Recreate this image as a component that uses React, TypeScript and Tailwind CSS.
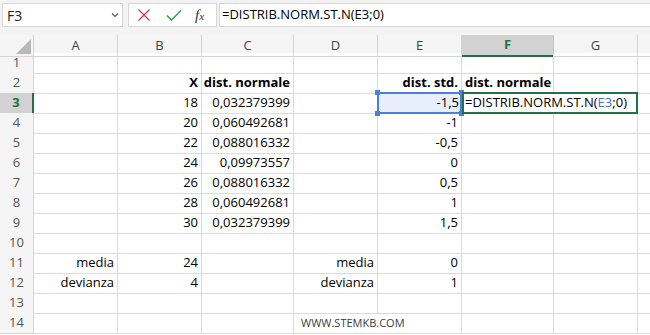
import React from "react";

type Cell = { v: string; a?: "l" | "r"; b?: boolean };

const cols = ["A", "B", "C", "D", "E", "F", "G"];

const rows: (Cell | null)[][] = [
  [null, null, null, null, null, null, null],
  [null, { v: "X", a: "r", b: true }, { v: "dist. normale", a: "r", b: true }, null, { v: "dist. std.", a: "r", b: true }, { v: "dist. normale", a: "l", b: true }, null],
  [null, { v: "18", a: "r" }, { v: "0,032379399", a: "r" }, null, { v: "-1,5", a: "r" }, null, null],
  [null, { v: "20", a: "r" }, { v: "0,060492681", a: "r" }, null, { v: "-1", a: "r" }, null, null],
  [null, { v: "22", a: "r" }, { v: "0,088016332", a: "r" }, null, { v: "-0,5", a: "r" }, null, null],
  [null, { v: "24", a: "r" }, { v: "0,09973557", a: "r" }, null, { v: "0", a: "r" }, null, null],
  [null, { v: "26", a: "r" }, { v: "0,088016332", a: "r" }, null, { v: "0,5", a: "r" }, null, null],
  [null, { v: "28", a: "r" }, { v: "0,060492681", a: "r" }, null, { v: "1", a: "r" }, null, null],
  [null, { v: "30", a: "r" }, { v: "0,032379399", a: "r" }, null, { v: "1,5", a: "r" }, null, null],
  [null, null, null, null, null, null, null],
  [{ v: "media", a: "r" }, { v: "24", a: "r" }, null, { v: "media", a: "r" }, { v: "0", a: "r" }, null, null],
  [{ v: "devianza", a: "r" }, { v: "4", a: "r" }, null, { v: "devianza", a: "r" }, { v: "1", a: "r" }, null, null],
  [null, null, null, null, null, null, null],
  [null, null, null, null, null, null, null],
];

const grid = "grid grid-cols-[34px_84px_84px_92px_84px_84px_92px_84px_12px]";

export default function App() {
  return (
    <div className="w-[650px] h-[335px] overflow-hidden bg-white font-['Open_Sans',sans-serif] text-[#000]">
      {/* formula bar */}
      <div className="flex h-[35px] bg-[#f3f3f3] pt-[3px] pl-[2px]">
        <div className="w-[121px] h-[24px] bg-white border border-[#d6d6d6] flex items-center justify-between pl-[4px] pr-[3px] text-[14px] text-[#222]">
          <span>F3</span>
          <svg width="8" height="6" viewBox="0 0 8 6"><path d="M1 1.5 L4 4.5 L7 1.5" fill="none" stroke="#555" strokeWidth="1.1" /></svg>
        </div>
        <div className="ml-[5px] w-[89px] h-[24px] bg-white border border-[#d6d6d6] flex items-center">
          <svg className="ml-[8px]" width="14" height="14" viewBox="0 0 14 14"><path d="M1.5 1.5 L12.5 12.5 M12.5 1.5 L1.5 12.5" stroke="#e0393e" strokeWidth="1.3" fill="none" /></svg>
          <svg className="ml-[15px]" width="16" height="13" viewBox="0 0 16 13"><path d="M1 6.5 L5.5 11 L15 1.5" stroke="#2f9e44" strokeWidth="1.4" fill="none" /></svg>
          <span className="ml-[13px] font-['Liberation_Serif',serif] italic text-[15px] text-[#333] leading-none">f<span className="text-[11px]">x</span></span>
        </div>
        <div className="ml-[2px] flex-1 h-[24px] bg-white border border-r-0 border-[#d6d6d6] flex items-center pl-[2px] text-[13px] whitespace-nowrap">
          =DISTRIB.NORM.ST.N(E3;0)
        </div>
      </div>

      {/* column headers */}
      <div className={grid + " h-[18px] bg-[#f5f5f5]"}>
        <div className="relative border-r border-b border-[#d4d4d4]">
          <svg className="absolute right-[2px] bottom-[2px]" width="15" height="15" viewBox="0 0 15 15"><polygon points="15,0 15,15 0,15" fill="#b8b8b8" /></svg>
        </div>
        {cols.map((c) =>
          c === "F" ? (
            <div key={c} className="bg-[#d2d2d2] border-r border-[#c4c4c4] border-b-2 border-b-[#217346] flex items-center justify-center text-[13px] font-bold text-[#217346]">
              {c}
            </div>
          ) : (
            <div key={c} className="border-r border-b border-[#d4d4d4] flex items-center justify-center text-[13px] text-[#444]">
              {c}
            </div>
          )
        )}
        <div className="border-b border-[#d4d4d4]" />
      </div>

      {/* rows */}
      {rows.map((r, i) => {
        const n = i + 1;
        const sel = n === 3;
        return (
          <div key={n} className={grid + " h-[20px]"}>
            {sel ? (
              <div className="bg-[#d2d2d2] border-r-2 border-r-[#217346] border-b border-[#c4c4c4] flex items-center justify-center text-[13px] font-bold text-[#217346]">{n}</div>
            ) : (
              <div className="bg-[#f5f5f5] border-r border-b border-[#d4d4d4] flex items-center justify-center text-[13px] text-[#555]">{n}</div>
            )}
            {r.map((c, j) => {
              if (sel && j === 4) {
                return (
                  <div key={j} className="relative bg-[#e8eefa] border-b border-[#dadada] flex items-center justify-end pr-[3px] text-[13px]">
                    {c?.v}
                    <div className="absolute -top-px left-[-1px] right-0 bottom-[-1px] border-2 border-[#4a7fe0]" />
                    <div className="absolute -top-[3px] -left-[3px] w-[5px] h-[5px] bg-[#4a7fe0]" />
                    <div className="absolute -top-[3px] -right-[2px] w-[5px] h-[5px] bg-[#4a7fe0]" />
                    <div className="absolute -bottom-[3px] -left-[3px] w-[5px] h-[5px] bg-[#4a7fe0]" />
                    <div className="absolute -bottom-[3px] -right-[2px] w-[5px] h-[5px] bg-[#4a7fe0]" />
                  </div>
                );
              }
              if (sel && j === 5) {
                return (
                  <div key={j} className="relative col-span-2 border-r border-b border-[#dadada] flex items-center pl-[3px] text-[13px] whitespace-nowrap">
                    <span>=DISTRIB.NORM.ST.N(</span>
                    <span className="text-[#4472c4]">E3</span>
                    <span>;0)</span>
                    <div className="absolute -top-px left-0 -right-px bottom-[-1px] border-2 border-[#217346]" />
                  </div>
                );
              }
              if (sel && j === 6) return null;
              if (n === 14 && j === 3) {
                return (
                  <div key={j} className="border-b border-[#dadada] flex items-center justify-start pl-[7px] whitespace-nowrap">
                    <span className="text-[11px] text-[#404040]">WWW.STEMKB.COM</span>
                  </div>
                );
              }
              return (
                <div
                  key={j}
                  className={
                    "border-r border-b border-[#dadada] flex items-center px-[3px] text-[13px] whitespace-nowrap " +
                    (c?.a === "l" ? "justify-start " : "justify-end ") +
                    (c?.b ? "font-bold" : "")
                  }
                >
                  {c?.v}
                </div>
              );
            })}
            <div className="border-b border-[#dadada]" />
          </div>
        );
      })}
    </div>
  );
}
